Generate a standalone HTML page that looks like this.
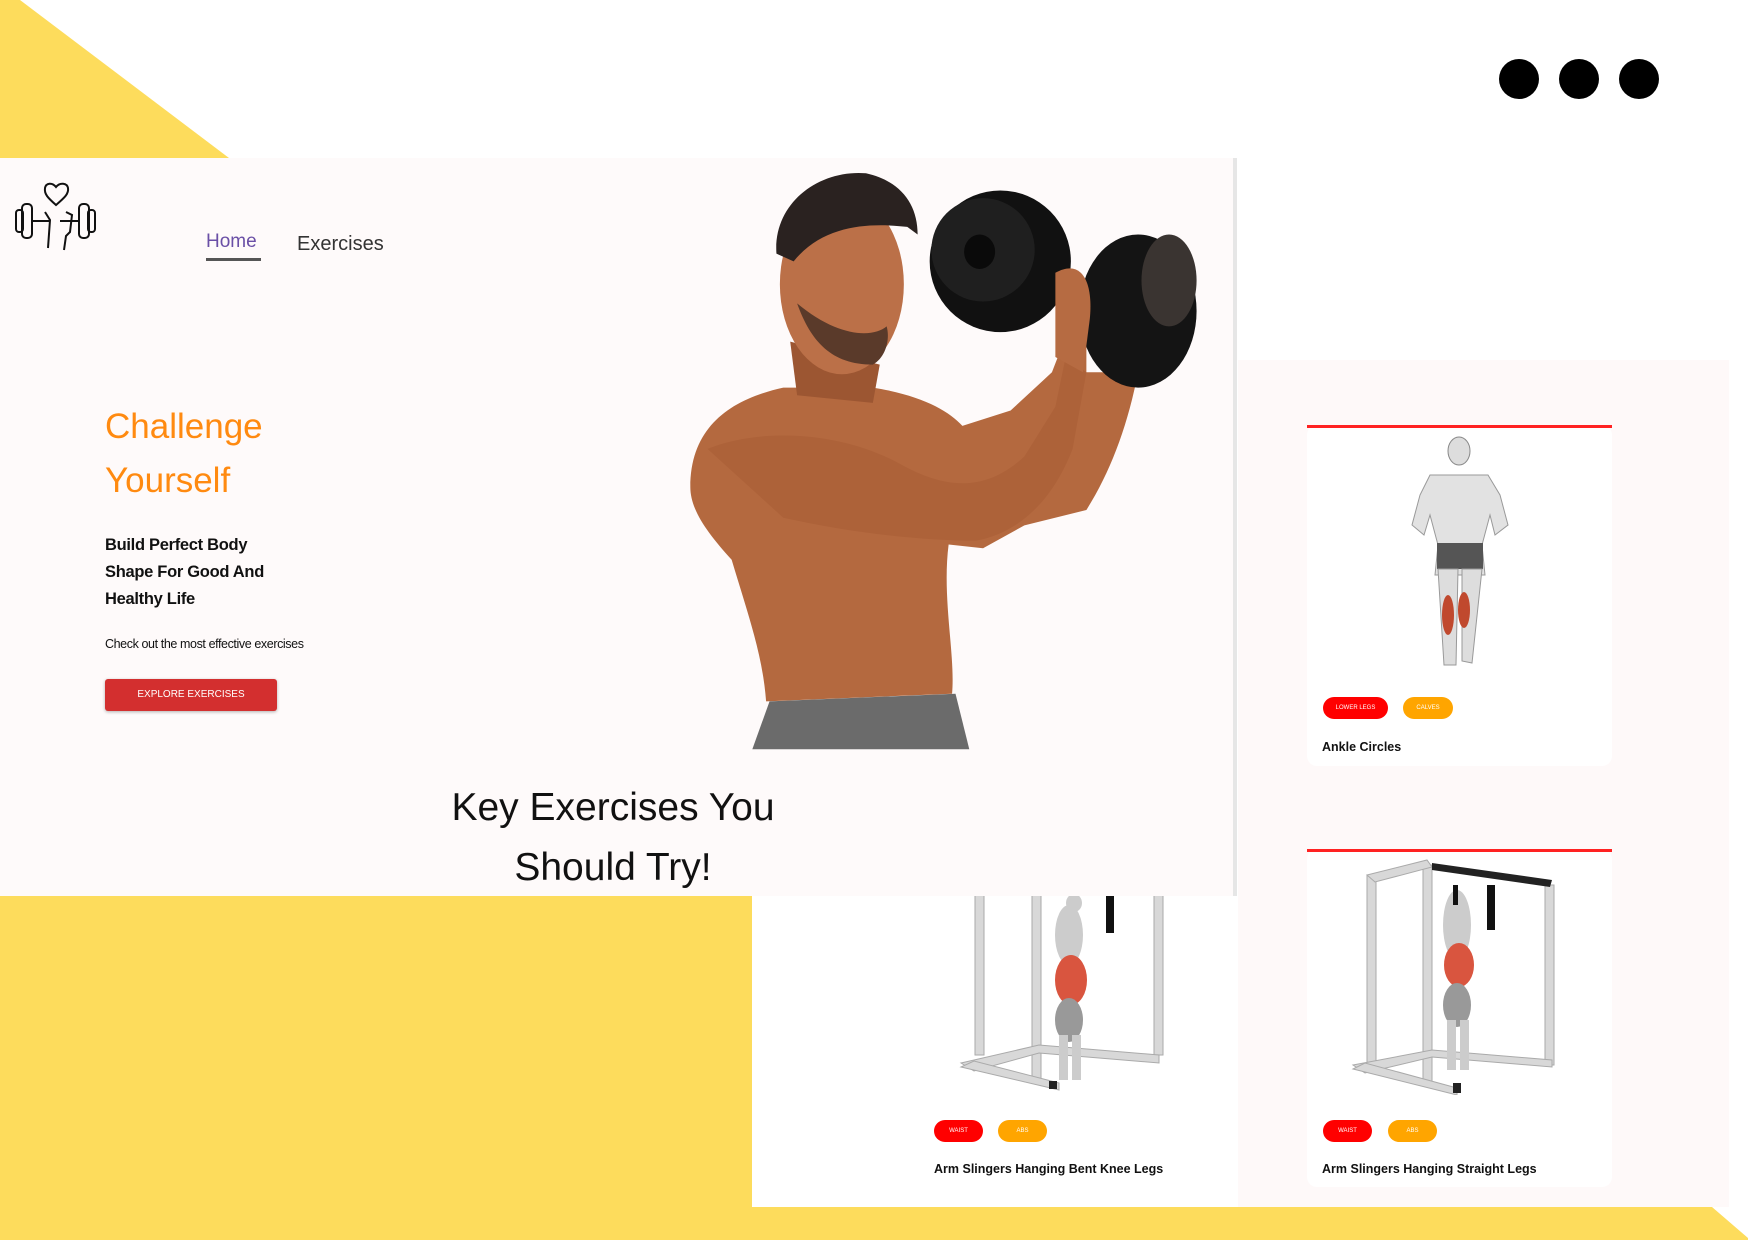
<!DOCTYPE html>
<html><head><meta charset="utf-8"><style>
*{margin:0;padding:0;box-sizing:border-box}
body{width:1748px;height:1240px;position:relative;overflow:hidden;background:#fff;font-family:"Liberation Sans",sans-serif}
.abs{position:absolute}
.card{position:absolute;background:#fff;border-radius:10px}
.tag{position:absolute;height:22px;border-radius:11px;color:#fff;font-size:6px;text-align:center;line-height:22px}
.ttl{position:absolute;font-size:12.5px;font-weight:bold;color:#111;white-space:nowrap}
.rd{background:#ff0000}.or{background:#ffa500}
</style></head><body>
<svg class="abs" style="left:0;top:0" width="1748" height="1240">
<polygon points="0,0 20,0 229,158 0,158" fill="#fddc5c"/>
<polygon points="0,896 752,896 752,1207 1712,1207 1748,1238 1748,1240 0,1240" fill="#fddc5c"/>
<circle cx="1519" cy="79" r="20" fill="#000"/><circle cx="1579" cy="79" r="20" fill="#000"/><circle cx="1639" cy="79" r="20" fill="#000"/>
<rect x="1238" y="360" width="491" height="847" fill="#fef9f9"/>
</svg>
<!-- card bottom-left -->
<div class="card" style="left:919px;top:880px;width:304px;height:307px"></div>
<svg class="abs" style="left:919px;top:895px" width="304" height="200" viewBox="0 0 304 200">
<g fill="#d8d8d8" stroke="#aaa" stroke-width="1">
<rect x="56" y="0" width="9" height="160"/><rect x="113" y="0" width="9" height="185"/><rect x="235" y="0" width="9" height="160"/>
<polygon points="42,168 120,150 240,160 240,168 120,158 55,176"/>
<polygon points="42,172 140,195 140,188 55,166"/>
</g>
<rect x="130" y="186" width="8" height="8" fill="#222"/>
<g><ellipse cx="150" cy="40" rx="14" ry="30" fill="#ccc"/><ellipse cx="152" cy="85" rx="16" ry="25" fill="#d9553f"/><ellipse cx="150" cy="125" rx="14" ry="22" fill="#999"/><rect x="140" y="140" width="9" height="45" fill="#ccc"/><rect x="153" y="140" width="9" height="45" fill="#ccc"/><ellipse cx="155" cy="8" rx="8" ry="9" fill="#ccc"/><rect x="187" y="0" width="8" height="38" fill="#111"/></g>
</svg>
<div class="tag rd" style="left:934px;top:1120px;width:49px">WAIST</div>
<div class="tag or" style="left:998px;top:1120px;width:49px">ABS</div>
<div class="ttl" style="left:934px;top:1162px">Arm Slingers Hanging Bent Knee Legs</div>
<!-- main panel -->
<div class="abs" style="left:0;top:158px;width:1233px;height:738px;background:#fefafa"></div>
<div class="abs" style="left:1233px;top:158px;width:4px;height:738px;background:#e6e6e6"></div>
<svg class="abs" style="left:0;top:170px" width="110" height="90" viewBox="0 0 110 90" fill="none" stroke="#111" stroke-width="2">
<path d="M56,35 C48,28 44,24 45,18 C46,13 52,12 56,17 C60,12 67,13 68,18 C69,24 64,28 56,35Z"/>
<rect x="22" y="34" width="10" height="34" rx="4"/><rect x="16" y="40" width="7" height="22" rx="3"/>
<rect x="79" y="34" width="10" height="34" rx="4"/><rect x="88" y="40" width="7" height="22" rx="3"/>
<path d="M32,51 H50 M60,51 H79 M45,42 L50,50 L48,78 M66,42 L72,45 L70,62 L66,66 L64,80"/>
</svg>
<div class="abs" style="left:206px;top:231px;font-size:19px;color:#6a4fa6">Home</div>
<div class="abs" style="left:206px;top:258px;width:55px;height:3px;background:#555"></div>
<div class="abs" style="left:297px;top:233px;font-size:20px;color:#333">Exercises</div>
<div class="abs" style="left:105px;top:400px;font-size:35px;line-height:54px;color:#ff8a10">Challenge<br>Yourself</div>
<div class="abs" style="left:105px;top:532px;font-size:16.5px;line-height:27px;color:#111;font-weight:bold;letter-spacing:-0.3px">Build Perfect Body<br>Shape For Good And<br>Healthy Life</div>
<div class="abs" style="left:105px;top:637px;font-size:12.5px;color:#111;letter-spacing:-0.4px">Check out the most effective exercises</div>
<div class="abs" style="left:105px;top:679px;width:172px;height:32px;background:#d32f2f;border-radius:3px;color:#fff;font-size:10px;text-align:center;line-height:32px;box-shadow:0 1px 3px rgba(0,0,0,.3)">EXPLORE EXERCISES</div>
<div class="abs" style="left:413px;top:778px;width:400px;text-align:center;font-size:39px;line-height:60px;color:#111">Key Exercises You<br>Should Try!</div>
<svg class="abs" style="left:680px;top:158px" width="540" height="600" viewBox="0 0 1568 1568" preserveAspectRatio="none">
<path d="M30,860 C30,700 150,630 300,600 L560,600 C700,620 780,660 820,700 L960,660 L1080,560 L1140,420 L1180,380 L1180,560 L1330,560 C1300,700 1250,820 1180,920 L1000,960 L880,1020 L780,1010 C760,1150 800,1300 790,1400 L250,1420 C240,1300 200,1200 150,1050 C80,980 30,920 30,860Z" fill="#b4693f"/>
<path d="M320,480 L340,620 L560,640 L580,540Z" fill="#9c5632"/>
<ellipse cx="470" cy="330" rx="180" ry="235" fill="#bb7048"/>
<path d="M280,250 C270,120 400,30 540,40 C640,60 690,120 690,200 L660,180 C560,170 420,170 330,270Z" fill="#2a2220"/>
<path d="M340,380 C380,480 440,540 560,540 C600,520 610,470 600,440 C560,470 460,470 340,380Z" fill="#5a3a2a"/>
<path d="M80,760 C250,700 480,720 640,800 C760,860 880,880 1000,780 L1090,650 L1120,520 L1180,560 L1140,760 C1080,900 980,980 860,1000 C700,1000 500,980 300,940Z" fill="#a85d36" opacity=".6"/>
<path d="M260,1420 L800,1400 L840,1545 L210,1545Z" fill="#6b6b6b"/>
<ellipse cx="1330" cy="400" rx="170" ry="200" fill="#141414"/>
<ellipse cx="1420" cy="320" rx="80" ry="120" fill="#3a3431"/>
<ellipse cx="930" cy="270" rx="205" ry="185" fill="#111"/>
<ellipse cx="880" cy="240" rx="150" ry="135" fill="#1f1f1f"/>
<circle cx="870" cy="245" r="45" fill="#0a0a0a"/>
<path d="M1090,300 C1170,260 1200,330 1190,420 L1170,560 L1090,520Z" fill="#b66b42"/>
</svg>
<!-- right cards -->
<div class="card" style="left:1307px;top:425px;width:305px;height:341px"></div>
<div class="abs" style="left:1307px;top:425px;width:305px;height:3px;background:#f22"></div>
<svg class="abs" style="left:1400px;top:435px" width="120" height="240" viewBox="0 0 120 240">
<ellipse cx="59" cy="16" rx="11" ry="14" fill="#ddd" stroke="#888"/>
<path d="M30,40 L88,40 L100,60 L108,90 L95,100 L90,80 L82,110 L85,140 L35,140 L38,110 L30,80 L24,100 L12,90 L20,60Z" fill="#e2e2e2" stroke="#999"/>
<rect x="37" y="108" width="46" height="26" fill="#555"/>
<path d="M38,134 L58,134 L56,230 L44,230Z" fill="#ddd" stroke="#999"/>
<path d="M62,134 L82,134 L72,228 L62,226Z" fill="#ddd" stroke="#999"/>
<ellipse cx="48" cy="180" rx="6" ry="20" fill="#c0492e"/><ellipse cx="64" cy="175" rx="6" ry="18" fill="#c0492e"/>
</svg>
<div class="tag rd" style="left:1323px;top:697px;width:65px">LOWER LEGS</div>
<div class="tag or" style="left:1403px;top:697px;width:50px">CALVES</div>
<div class="ttl" style="left:1322px;top:740px">Ankle Circles</div>

<div class="card" style="left:1307px;top:849px;width:305px;height:338px"></div>
<div class="abs" style="left:1307px;top:849px;width:305px;height:3px;background:#f22"></div>
<svg class="abs" style="left:1307px;top:855px" width="305" height="240" viewBox="0 0 305 240">
<g fill="#d8d8d8" stroke="#aaa">
<rect x="60" y="20" width="9" height="190"/><rect x="116" y="10" width="9" height="220"/><rect x="238" y="30" width="9" height="180"/>
<polygon points="60,20 120,5 125,12 68,27"/>
<polygon points="46,210 125,195 245,205 245,212 125,202 58,218"/>
<polygon points="46,214 150,240 150,233 58,208"/>
</g>
<polygon points="125,8 245,25 243,32 125,15" fill="#222"/>
<rect x="146" y="228" width="8" height="10" fill="#222"/>
<ellipse cx="150" cy="70" rx="14" ry="35" fill="#ccc"/><ellipse cx="152" cy="110" rx="15" ry="22" fill="#d9553f"/><ellipse cx="150" cy="150" rx="14" ry="22" fill="#999"/>
<rect x="140" y="165" width="9" height="50" fill="#ccc"/><rect x="153" y="165" width="9" height="50" fill="#ccc"/>
<rect x="180" y="30" width="8" height="45" fill="#111"/><rect x="146" y="30" width="5" height="20" fill="#111"/>
</svg>
<div class="tag rd" style="left:1323px;top:1120px;width:49px">WAIST</div>
<div class="tag or" style="left:1388px;top:1120px;width:49px">ABS</div>
<div class="ttl" style="left:1322px;top:1162px">Arm Slingers Hanging Straight Legs</div>
</body></html>
